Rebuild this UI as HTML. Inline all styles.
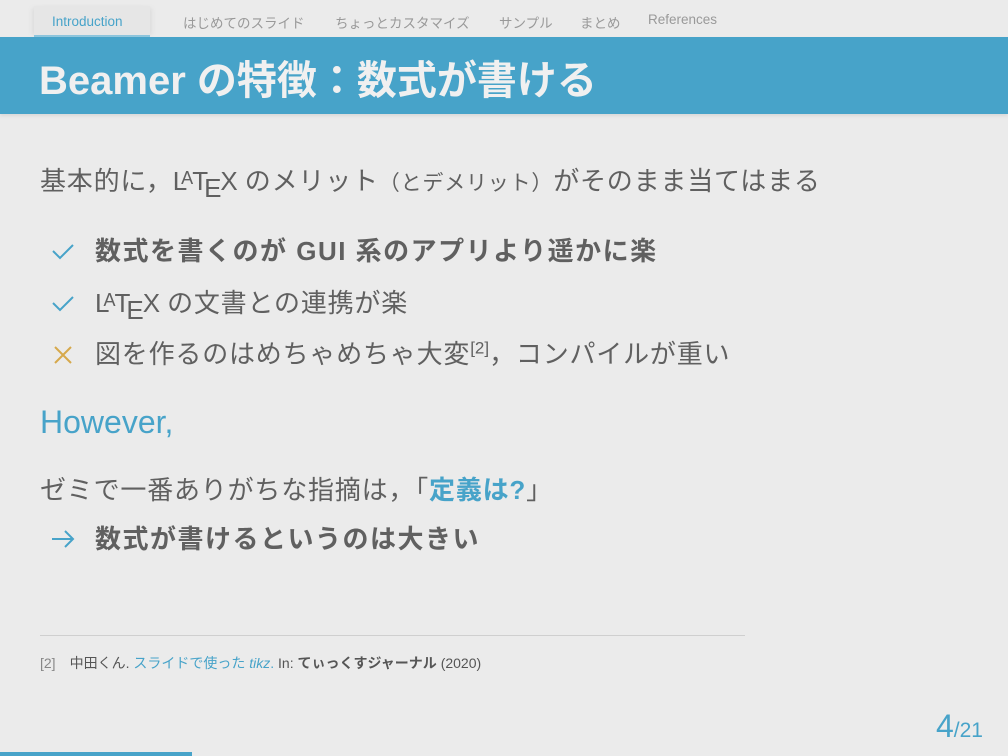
<!DOCTYPE html>
<html><head><meta charset="utf-8"><style>
body{margin:0;width:1008px;height:756px;background:#ebebeb;position:relative;overflow:hidden;font-family:"Liberation Sans","Noto Sans CJK JP",sans-serif;color:#606060}
.a{position:absolute;white-space:nowrap}
.nav{font-size:13.5px;color:#999;top:12px}
.tab{position:absolute;left:34px;top:6px;width:116px;height:31px;background:#e6e6e6;box-shadow:-4px 0 4px -2px #ddd,4px 0 4px -2px #ddd}
.bar{position:absolute;left:0;top:37px;width:1008px;height:77px;background:#47a3c9;box-shadow:0 2px 3px #d8d8d8}
.t{font-size:26px;letter-spacing:0.8px}
.b{font-weight:bold}
.bl{color:#47a3c9}
.sm{font-size:21px}
.lx{letter-spacing:-1px;font-family:"Liberation Sans Narrow","Liberation Sans",sans-serif}
</style></head><body>
<div class="tab"></div>
<div style="position:absolute;left:34px;top:35px;width:116px;height:2px;background:#8cc4dc"></div>
<div class="a nav" style="left:52px;top:14px;color:#47a3c9">Introduction</div>
<div class="a nav" style="left:183px">はじめてのスライド</div>
<div class="a nav" style="left:335px">ちょっとカスタマイズ</div>
<div class="a nav" style="left:499px">サンプル</div>
<div class="a nav" style="left:580px">まとめ</div>
<div class="a nav" style="left:648px">References</div>
<div class="bar"></div>
<div class="a b" style="left:39px;top:48px;font-size:40px;color:#f0f0f0">Beamer の特徴：数式が書ける</div>

<div class="a t" style="left:40px;top:161px">基本的に，<span class="lx">L<span style="font-size:18px;vertical-align:6px;margin-left:-5px">A</span>T<span style="position:relative;top:7px;margin-left:-3px">E</span>X</span> のメリット<span class="sm">（とデメリット）</span>がそのまま当てはまる</div>

<svg class="a" style="left:50px;top:240px" width="26" height="22"><path d="M3 11 L10 18 L23 5" fill="none" stroke="#47a3c9" stroke-width="2"/></svg>
<div class="a t b" style="left:95px;top:231px;letter-spacing:1.5px">数式を書くのが GUI 系のアプリより遥かに楽</div>
<svg class="a" style="left:50px;top:292px" width="26" height="22"><path d="M3 11 L10 18 L23 5" fill="none" stroke="#47a3c9" stroke-width="2"/></svg>
<div class="a t" style="left:95px;top:283px"><span class="lx">L<span style="font-size:18px;vertical-align:6px;margin-left:-5px">A</span>T<span style="position:relative;top:7px;margin-left:-3px">E</span>X</span> の文書との連携が楽</div>
<svg class="a" style="left:52px;top:344px" width="22" height="22"><path d="M3 3 L19 19 M19 3 L3 19" fill="none" stroke="#d6a94c" stroke-width="2"/></svg>
<div class="a t" style="left:95px;top:334px">図を作るのはめちゃめちゃ大変<sup style="font-size:17px;letter-spacing:0">[2]</sup>，コンパイルが重い</div>

<div class="a bl" style="left:40px;top:404px;font-size:32px">However,</div>
<div class="a t" style="left:40px;top:470px">ゼミで一番ありがちな指摘は，「<span class="b bl">定義は?</span>」</div>
<svg class="a" style="left:50px;top:528px" width="26" height="22"><path d="M2 11 H23 M15 3 L23 11 L15 19" fill="none" stroke="#47a3c9" stroke-width="2"/></svg>
<div class="a t b" style="left:95px;top:519px;letter-spacing:1.5px">数式が書けるというのは大きい</div>

<div style="position:absolute;left:40px;top:635px;width:705px;height:1px;background:#cfcfcf"></div>
<div class="a" style="left:40px;top:653px;font-size:14px;color:#555"><span style="color:#888">[2]</span><span style="display:inline-block;width:14px"></span>中田くん. <span class="bl">スライドで使った <i>tikz</i>.</span> In: <b>てぃっくすジャーナル</b> (2020)</div>

<div class="a bl" style="left:936px;top:708px;font-size:32px">4<span style="font-size:21px">/21</span></div>
<div style="position:absolute;left:0;top:752px;width:192px;height:4px;background:#47a3c9"></div>
</body></html>
